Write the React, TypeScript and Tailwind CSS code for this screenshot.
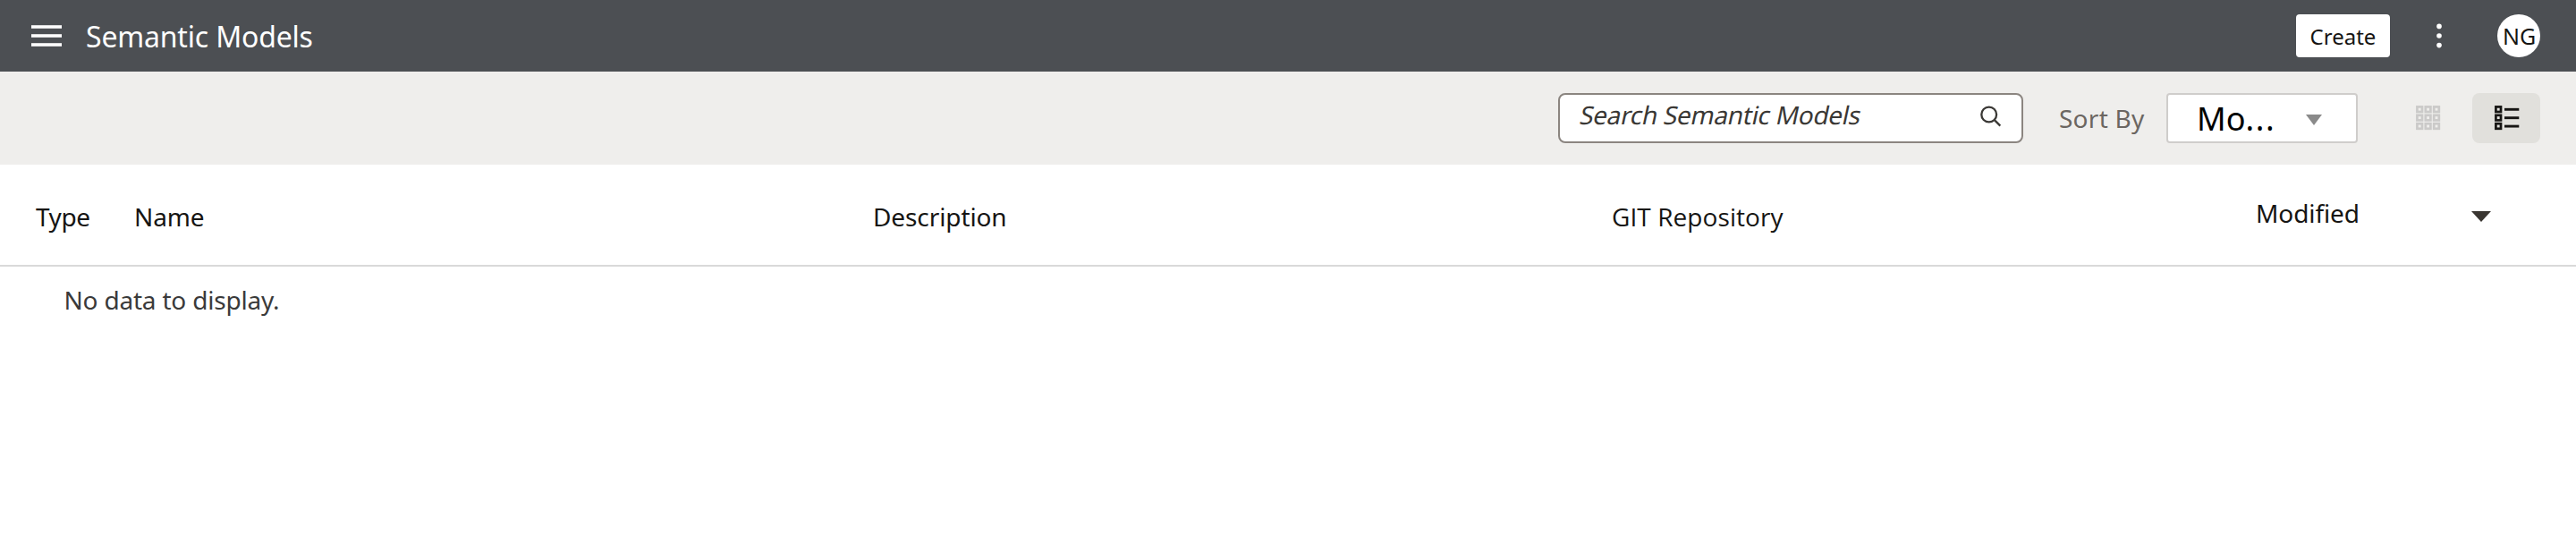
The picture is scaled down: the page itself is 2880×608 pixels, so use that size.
import React from 'react';

function MenuIcon() {
  return (
    <svg width="34" height="24" viewBox="0 0 34 24" fill="#fff" className="block">
      <rect x="0" y="0.2" width="34" height="3.6" />
      <rect x="0" y="10.2" width="34" height="3.6" />
      <rect x="0" y="20.2" width="34" height="3.6" />
    </svg>
  );
}

function KebabIcon() {
  return (
    <svg width="6" height="28" viewBox="0 0 6 28" fill="#fff" className="block">
      <circle cx="3" cy="3.4" r="2.8" />
      <circle cx="3" cy="14" r="2.8" />
      <circle cx="3" cy="24.6" r="2.8" />
    </svg>
  );
}

function SearchIcon() {
  return (
    <svg width="24" height="24" viewBox="0 0 24 24" fill="none" stroke="#3a3835" strokeWidth="2.3" className="block">
      <circle cx="9.7" cy="10" r="8.4" />
      <path d="M15.6 15.9 L22.3 22.6" />
    </svg>
  );
}

const cells = [0, 9.4, 18.8];

function Cell({ x, y }: { x: number; y: number }) {
  return <rect x={x + 1.4} y={y + 1.4} width="5.6" height="5.6" strokeWidth="2.7" />;
}

function GridIcon() {
  return (
    <svg width="28" height="28" viewBox="0 0 28 28" fill="none" stroke="#cbcac9" className="block">
      {cells.map((y) => cells.map((x) => <Cell key={`${x}-${y}`} x={x} y={y} />))}
    </svg>
  );
}

function ListIcon() {
  return (
    <svg width="28" height="28" viewBox="0 0 28 28" fill="none" stroke="#161513" className="block">
      {cells.map((y) => (
        <g key={y}>
          <Cell x={0} y={y} />
          <path d={`M11 ${y + 4.3} H27.3`} strokeWidth="2.9" />
        </g>
      ))}
    </svg>
  );
}

export default function App() {
  return (
    <div className="h-[608px] w-[2880px] overflow-hidden bg-white font-['Noto_Sans','Open_Sans',sans-serif] text-[28px] leading-[40px] text-[#161513]">
      <header className="flex h-20 items-center bg-[#4c4f53] pr-10 pl-[35px] text-white">
        <button aria-label="Menu">
          <MenuIcon />
        </button>
        <h1 className="ml-[27px] pt-px text-[32px] tracking-[-0.18px]">Semantic Models</h1>
        <button className="ml-auto flex h-12 w-[105px] items-center justify-center rounded bg-white pt-0.5 text-[24px] text-[#161513]">
          Create
        </button>
        <button aria-label="More" className="ml-[52px]">
          <KebabIcon />
        </button>
        <div className="ml-[62px] flex h-12 w-12 items-center justify-center rounded-full bg-white pl-px text-[25px] text-[#161513]">
          NG
        </div>
      </header>

      <div className="flex h-[104px] items-center justify-end bg-[#efeeec] pr-10">
        <div className="flex h-14 w-[520px] items-start justify-between rounded-lg border-2 border-[#8b8580] bg-white pt-0.5 pr-[22px] pl-[22.5px]">
          <span className="inline-block -skew-x-12 tracking-[-0.3px] text-[#3a3835]">Search Semantic Models</span>
          <span className="pt-2.5">
            <SearchIcon />
          </span>
        </div>
        <span className="ml-10 w-[120px] tracking-[0.25px] whitespace-nowrap text-[#6b6661]">Sort By</span>
        <div className="flex h-14 w-[214px] items-center rounded border-2 border-[#cfcdcb] bg-white pl-[32px] text-[36px] text-black">
          <span className="w-[122px] pt-0.5">
            Mo<span className="tracking-[1.6px]">...</span>
          </span>
          <svg width="18" height="12" viewBox="0 0 18 12" fill="#8a8a8a" className="mt-1">
            <path d="M0 0 H18 L9 12 Z" />
          </svg>
        </div>
        <button aria-label="Grid view" className="ml-[65px]">
          <GridIcon />
        </button>
        <button aria-label="List view" className="ml-[35px] flex h-14 w-[76px] items-center rounded-lg bg-[#e1e0dc] pl-[24.5px]">
          <ListIcon />
        </button>
      </div>

      <div className="flex h-[114px] items-center border-b-2 border-[#d9d9d9] pt-1 pl-10">
        <div className="w-[110px] tracking-[-0.4px]">Type</div>
        <div className="w-[826px] tracking-[-0.1px]">Name</div>
        <div className="w-[826px] tracking-[-0.1px]">Description</div>
        <div className="w-[720px] font-['Open_Sans'] tracking-[0.08px]">GIT Repository</div>
        <div className="mb-2 w-[241px] tracking-[-0.1px]">Modified</div>
        <svg width="22" height="12" viewBox="0 0 22 12" fill="#3a3632">
          <path d="M0 0 H22 L11 12 Z" />
        </svg>
      </div>
      <div className="pt-[17px] pl-[71.5px] tracking-[-0.2px] text-[#3a3a3a]">No data to display.</div>
    </div>
  );
}
